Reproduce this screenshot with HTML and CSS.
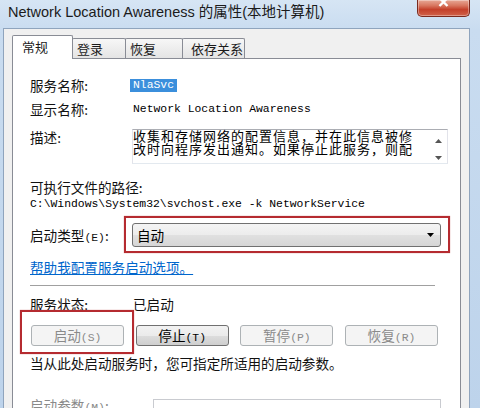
FILE: index.html
```html
<!DOCTYPE html>
<html>
<head>
<meta charset="UTF-8">
<title>Network Location Awareness 的属性(本地计算机)</title>
<link rel="stylesheet" href="styles.css">
</head>
<body>
<div class="window">
	<!-- заголовок окна -->
	<div class="titlebar">
		<div class="title">Network Location Awareness 的属性(本地计算机)</div>
		<div class="close_btn">
			<svg width="51" height="16" viewBox="0 0 51 16"><path d="M21.5 -2 L29.5 6 M29.5 -2 L21.5 6" stroke="#fff" stroke-width="2.4" fill="none"/></svg>
		</div>
	</div>
	<div class="client">
		<div class="tabs">
			<div class="tab tab_active tab_1">常规</div>
			<div class="tab tab_2">登录</div>
			<div class="tab tab_3">恢复</div>
			<div class="tab tab_4">依存关系</div>
		</div>
		<div class="panel">
			<div class="row">
				<span class="label">服务名称:</span>
				<span class="mono selected">NlaSvc</span>
			</div>
			<div class="row row_display">
				<span class="label">显示名称:</span>
				<span class="mono">Network Location Awareness</span>
			</div>
			<div class="row row_desc">
				<span class="label">描述:</span>
				<div class="desc_box">
					<div class="desc_text">收集和存储网络的配置信息，并在此信息被修改时向程序发出通知。如果停止此服务，则配</div>
					<div class="scrollbar">
						<svg width="7" height="4" viewBox="0 0 7 4"><path d="M0 4 L3.5 0 L7 4 Z" fill="#555"/></svg>
						<svg width="7" height="4" viewBox="0 0 7 4"><path d="M0 0 L7 0 L3.5 4 Z" fill="#555"/></svg>
					</div>
				</div>
			</div>
			<div class="row row_path_label">可执行文件的路径:</div>
			<div class="row row_path mono">C:\Windows\System32\svchost.exe -k NetworkService</div>
			<div class="row row_type">
				<span class="label label_type">启动类型<span class="key">(E)</span>:</span>
				<div class="select">
					<span>自动</span>
					<svg class="select_arrow" width="7" height="4" viewBox="0 0 7 4"><path d="M0 0 L7 0 L3.5 4 Z" fill="#000"/></svg>
					<div class="mark mark_select"></div>
				</div>
			</div>
			<div class="row row_link"><a class="help_link" href="#">帮助我配置服务启动选项。</a></div>
			<div class="separator"></div>
			<div class="row row_status">
				<span class="label">服务状态:</span>
				<span>已启动</span>
			</div>
			<div class="buttons">
				<div class="btn btn_disabled">启动<span class="key">(S)</span><div class="mark mark_btn"></div></div>
				<div class="btn">停止<span class="key">(T)</span></div>
				<div class="btn btn_disabled">暂停<span class="key">(P)</span></div>
				<div class="btn btn_disabled">恢复<span class="key">(R)</span></div>
			</div>
			<div class="row row_note">当从此处启动服务时，您可指定所适用的启动参数。</div>
			<div class="row row_params">
				<span class="label label_params">启动参数<span class="key">(M)</span>:</span>
				<div class="params_input"></div>
			</div>
		</div>
	</div>
</div>
</body>
</html>
```

FILE: styles.css
```css
body {
	margin: 0;
	background: #c9dcf0;
	font-family: "Noto Sans CJK SC", sans-serif;
	font-size: 13.6px;
	color: #111;
}

/* окно */
.window {
	width: 480px;
	height: 408px;
	overflow: hidden;
	display: flex;
	flex-direction: column;
	background: linear-gradient(180deg, #d6e5f4 0, #c9dcf0 30px, #bdd3eb 100%);
}
.titlebar {
	height: 28px;
	flex: none;
	display: flex;
	align-items: flex-start;
}
.title {
	padding: 3px 0 0 8px;
	font-family: "Liberation Sans", "Noto Sans CJK SC", sans-serif;
	font-size: 14.5px;
	line-height: 19px;
	color: #1b1b1b;
	white-space: nowrap;
}
.close_btn {
	margin-left: auto;
	margin-right: 10px;
	width: 51px;
	height: 16px;
	border: 1px solid #7a2a1e;
	border-top: none;
	border-radius: 0 0 5px 5px;
	background: linear-gradient(180deg, #e7a896 0, #d8765f 35%, #c4402a 60%, #d0634a 100%);
	box-shadow: inset 0 0 0 1px rgba(255, 255, 255, 0.35);
}
.close_btn svg {
	display: block;
}
.client {
	flex: 1;
	min-height: 0;
	margin: 0 10px 0 3px;
	background: #f0f0f0;
	border: 1px solid #8fa4bd;
	border-bottom: none;
	padding: 6px 8px 0 8px;
	display: flex;
	flex-direction: column;
}

/* вкладки */
.tabs {
	display: flex;
	align-items: flex-end;
	height: 24px;
	flex: none;
	margin-bottom: -1px;
	position: relative;
	z-index: 1;
}
.tab {
	height: 19px;
	margin-bottom: 1px;
	margin-left: -1px;
	padding-left: 4px;
	border: 1px solid #898c95;
	border-bottom: none;
	border-radius: 2px 2px 0 0;
	background: linear-gradient(180deg, #f7f7f7, #e4e4e4);
	font-size: 13px;
	line-height: 19px;
	color: #1b1b1b;
}
.tab_active {
	height: 23px;
	margin-bottom: 0;
	margin-left: 0;
	padding-left: 9px;
	background: #fff;
	line-height: 22px;
}
.tab_1 { width: 50px; }
.tab_2 { width: 48px; }
.tab_3 { width: 52px; }
.tab_4 { width: 53px; padding-left: 8px; }

.panel {
	flex: 1;
	background: #fff;
	border: 1px solid #898c95;
	border-bottom: none;
	padding: 17px 0 0 17px;
	display: flex;
	flex-direction: column;
}

/* строки */
.row {
	display: flex;
	align-items: center;
	height: 18px;
	flex: none;
	white-space: nowrap;
}
.label {
	width: 103px;
	flex: none;
}
.mono {
	font-family: "Liberation Mono", monospace;
	font-size: 11.4px;
	color: #000;
}
.key {
	font-family: "Liberation Mono", monospace;
	font-size: 11.4px;
}
.selected {
	background: #3b8fdc;
	color: #fff;
	padding: 0 3px;
	margin-left: -3px;
	line-height: 13px;
}
.row_display {
	margin-top: 6px;
}
.row_desc {
	height: auto;
	align-items: flex-start;
	margin-top: 11px;
}
.row_desc .label {
	width: 102px;
	margin-top: -1px;
	line-height: 18px;
}
.desc_box {
	width: 314px;
	height: 33px;
	border: 1px solid;
	border-color: #abadb3 #e2e3ea #e3e9ef #e2e3ea;
	display: flex;
}
.desc_text {
	width: 285px;
	white-space: normal;
	font-size: 13px;
	letter-spacing: 1px;
	line-height: 12.5px;
	color: #000;
}
.scrollbar {
	margin-left: auto;
	width: 17px;
	padding-top: 9px;
	display: flex;
	flex-direction: column;
	align-items: center;
	gap: 13px;
}
.scrollbar svg {
	display: block;
}
.row_path_label {
	margin-top: 14px;
}
.row_path {
	height: 16px;
}
.row_type {
	height: 24px;
	margin-top: 11px;
}
.label_type {
	width: 102px;
}
.select {
	position: relative;
	width: 303px;
	height: 22px;
	padding-left: 4px;
	border: 1px solid #707070;
	border-radius: 3px;
	background: linear-gradient(180deg, #f4f4f4 0, #ececec 50%, #e0e0e0 51%, #d6d6d6 100%);
	display: flex;
	align-items: center;
	color: #000;
}
.select_arrow {
	margin-left: auto;
	margin-right: 6px;
}

/* красные рамки выделения */
.mark {
	position: absolute;
	border: 2px solid #b52b30;
	box-shadow: 0 0 1px rgba(181, 43, 48, 0.6);
	pointer-events: none;
}
.mark_select {
	left: -9px;
	right: -10px;
	top: -8px;
	bottom: -7px;
}
.mark_btn {
	left: -12px;
	right: -11px;
	top: -16px;
	bottom: -9px;
}

.row_link {
	margin-top: 11px;
}
.help_link {
	color: #0066cc;
	text-decoration: underline;
}
.separator {
	width: 405px;
	margin-top: 9px;
	border-top: 1px solid #a0a0a0;
	border-bottom: 1px solid #fff;
	flex: none;
}
.row_status {
	margin-top: 8px;
}
.buttons {
	display: flex;
	gap: 11.67px;
	margin: 12px 0 0 1px;
	flex: none;
}
.btn {
	position: relative;
	width: 91px;
	height: 19px;
	border: 1px solid #707070;
	border-radius: 3px;
	background: linear-gradient(180deg, #f2f2f2 0, #ebebeb 50%, #dddddd 51%, #cfcfcf 100%);
	text-align: center;
	line-height: 19px;
	color: #000;
}
.btn_disabled {
	border-color: #adb2b5;
	background: #f4f4f4;
	color: #8a8a8a;
}
.row_note {
	margin-top: 8px;
}
.row_params {
	margin-top: 23px;
	align-items: flex-start;
	color: #8a8a8a;
}
.label_params {
	width: 123px;
}
.params_input {
	width: 286px;
	height: 22px;
	margin-top: 4px;
	border: 1px solid #c9cbd0;
	background: #fff;
}
```
